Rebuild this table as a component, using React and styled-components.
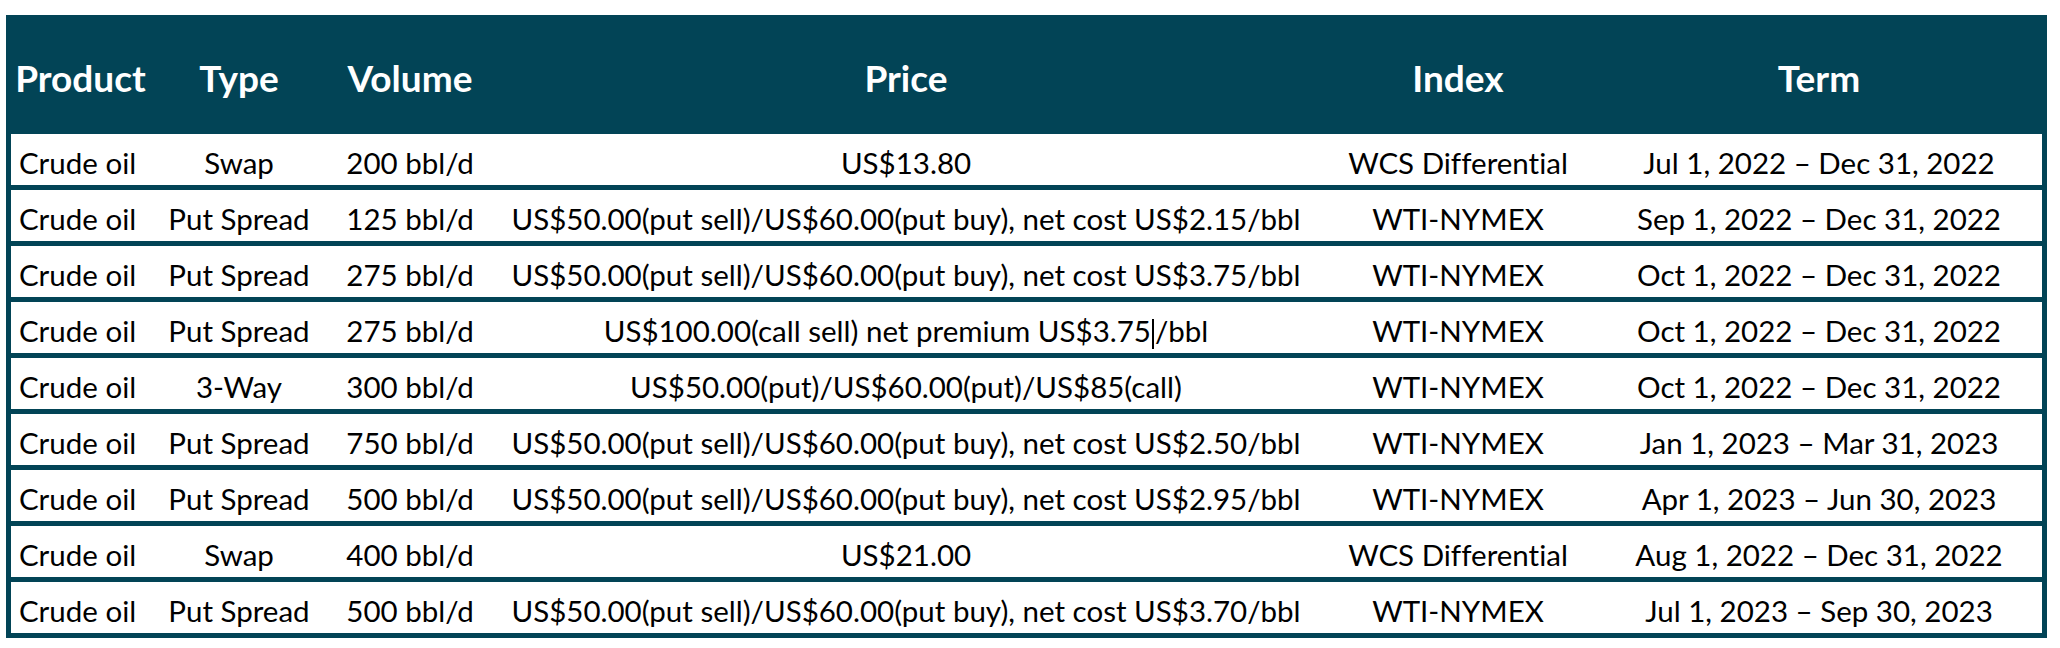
import React from 'react';
import styled, { createGlobalStyle } from 'styled-components';

const GlobalStyle = createGlobalStyle`
    body {
        margin: 0;
        background: #ffffff;
        font-family: Lato, "Open Sans", sans-serif;
        font-variant-ligatures: none;
    }
`

const TEAL = '#024456'

const Page = styled.div`
    padding: 15px 0 0 6px;
`

const Table = styled.div`
    width: 2041px;
    box-sizing: border-box;
    border: 5px solid ${TEAL};
    background: ${TEAL};
`

const Row = styled.div`
    display: grid;
    grid-template-columns: 139px 178px 164px 828px 276px 446px;
    height: ${props => props.head ? '114px' : '51px'};
    background: ${props => props.head ? TEAL : '#ffffff'};
    margin-bottom: ${props => props.last || props.head ? '0' : '5px'};
`

const HeadCell = styled.div`
    display: flex;
    align-items: center;
    justify-content: center;
    color: #ffffff;
    font-weight: 700;
    font-size: 37px;
    white-space: nowrap;
`

const Cell = styled.div`
    display: flex;
    align-items: center;
    justify-content: ${props => props.left ? 'flex-start' : 'center'};
    padding-left: ${props => props.left ? '8px' : '0'};
    padding-top: 5px;
    color: #000000;
    font-size: 29.5px;
    white-space: nowrap;
`

const Caret = styled.span`
    display: inline-block;
    width: 2px;
    height: 30px;
    background: #000;
    margin: 0 1px;
    transform: translateY(4px);
`

const headers = ['Product', 'Type', 'Volume', 'Price', 'Index', 'Term']

const rows = [
    ['Swap', '200 bbl/d', 'US$13.80', 'WCS Differential', 'Jul 1, 2022 – Dec 31, 2022'],
    ['Put Spread', '125 bbl/d', 'US$50.00(put sell)/US$60.00(put buy), net cost US$2.15/bbl', 'WTI-NYMEX', 'Sep 1, 2022 – Dec 31, 2022'],
    ['Put Spread', '275 bbl/d', 'US$50.00(put sell)/US$60.00(put buy), net cost US$3.75/bbl', 'WTI-NYMEX', 'Oct 1, 2022 – Dec 31, 2022'],
    ['Put Spread', '275 bbl/d', 'caret', 'WTI-NYMEX', 'Oct 1, 2022 – Dec 31, 2022'],
    ['3-Way', '300 bbl/d', 'US$50.00(put)/US$60.00(put)/US$85(call)', 'WTI-NYMEX', 'Oct 1, 2022 – Dec 31, 2022'],
    ['Put Spread', '750 bbl/d', 'US$50.00(put sell)/US$60.00(put buy), net cost US$2.50/bbl', 'WTI-NYMEX', 'Jan 1, 2023 – Mar 31, 2023'],
    ['Put Spread', '500 bbl/d', 'US$50.00(put sell)/US$60.00(put buy), net cost US$2.95/bbl', 'WTI-NYMEX', 'Apr 1, 2023 – Jun 30, 2023'],
    ['Swap', '400 bbl/d', 'US$21.00', 'WCS Differential', 'Aug 1, 2022 – Dec 31, 2022'],
    ['Put Spread', '500 bbl/d', 'US$50.00(put sell)/US$60.00(put buy), net cost US$3.70/bbl', 'WTI-NYMEX', 'Jul 1, 2023 – Sep 30, 2023'],
]

const App = () => {
    return (
        <Page>
            <GlobalStyle />
            <Table>
                <Row head>
                    {headers.map(h => <HeadCell key={h}>{h}</HeadCell>)}
                </Row>
                {rows.map((r, i) => (
                    <Row key={i} last={i === rows.length - 1}>
                        <Cell left>Crude oil</Cell>
                        <Cell>{r[0]}</Cell>
                        <Cell>{r[1]}</Cell>
                        <Cell>
                            {r[2] === 'caret'
                                ? <>US$100.00(call sell) net premium US$3.75<Caret />/bbl</>
                                : r[2]}
                        </Cell>
                        <Cell>{r[3]}</Cell>
                        <Cell>{r[4]}</Cell>
                    </Row>
                ))}
            </Table>
        </Page>
    )
}

export default App;
